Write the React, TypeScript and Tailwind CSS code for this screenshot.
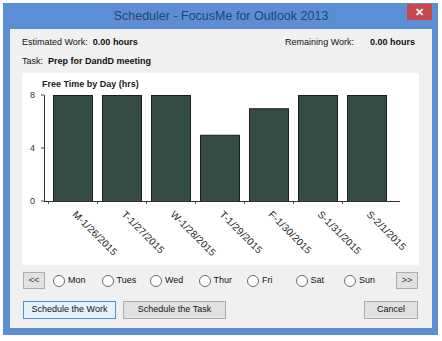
const days = [
  { label: "M-1/26/2015", value: 8 },
  { label: "T-1/27/2015", value: 8 },
  { label: "W-1/28/2015", value: 8 },
  { label: "T-1/29/2015", value: 5 },
  { label: "F-1/30/2015", value: 7 },
  { label: "S-1/31/2015", value: 8 },
  { label: "S-2/1/2015", value: 8 },
];

const radios = ["Mon", "Tues", "Wed", "Thur", "Fri", "Sat", "Sun"];

function FreeTimeChart() {
  const top = 22;
  const zero = 128;
  const scale = (zero - top) / 8;
  return (
    <svg width="397" height="192" className="block">
      <text x="20" y="14" fontSize="9" fontWeight="700" fill="#1a1a1a" fontFamily="Liberation Sans, Arial, sans-serif">
        Free Time by Day (hrs)
      </text>
      {[8, 4, 0].map((v) => (
        <g key={v}>
          <text
            x="13"
            y={zero - v * scale + 3}
            fontSize="9"
            textAnchor="end"
            fill="#333"
            fontFamily="Liberation Sans, Arial, sans-serif"
          >
            {v}
          </text>
          <line x1="19" x2="22" y1={zero - v * scale} y2={zero - v * scale} stroke="#444" />
        </g>
      ))}
      {days.map((d, i) => {
        const x = 31 + i * 49;
        const h = d.value * scale;
        return (
          <g key={d.label}>
            <rect x={x + 0.5} y={zero - h + 0.5} width="39" height={h} fill="#354b46" stroke="#1b1f1e" />
            <line x1={x - 4.5} x2={x - 4.5} y1={zero} y2={zero + 3} stroke="#555" />
            <text
              x={x + 19}
              y={zero + 14}
              fontSize="10"
              letterSpacing="0.2"
              fill="#222"
              transform={`rotate(45 ${x + 19} ${zero + 14})`}
              fontFamily="Liberation Sans, Arial, sans-serif"
            >
              {d.label}
            </text>
          </g>
        );
      })}
      <line x1="22.5" x2="22.5" y1={top} y2={zero + 0.5} stroke="#333" />
      <line x1="22" x2="378" y1={zero + 0.5} y2={zero + 0.5} stroke="#333" />
    </svg>
  );
}

function Radio({ label }: { label: string }) {
  return (
    <label className="flex w-[48.5px] shrink-0 items-center gap-[3px]">
      <span className="h-[12px] w-[12px] rounded-full border border-[#6b6b6b] bg-white" />
      <span>{label}</span>
    </label>
  );
}

export default function App() {
  return (
    <div className="h-[341px] w-[442px] overflow-hidden bg-white pl-[3px] pt-[3px] font-['Liberation_Sans',Arial,sans-serif] text-[9px] text-[#111]">
      <div className="flex h-[332px] w-[435px] flex-col bg-[#5b8ed5] pb-[7px] pl-[7px] pr-[6px]">
        {/* title bar */}
        <div className="relative flex h-[26px] shrink-0 items-center justify-center">
          <span className="text-[12.5px] text-[#2a4468]">Scheduler - FocusMe for Outlook 2013</span>
          <div className="absolute right-[0px] top-[1px] flex h-[16px] w-[25px] items-center justify-center bg-[#c9474b] text-[11px] font-bold leading-none text-white">
            ✕
          </div>
        </div>

        {/* body */}
        <div className="flex flex-1 flex-col bg-[#f0f0f0] pt-[7px]">
          <div className="flex h-[14px] items-center pl-[12px] pr-[17px]">
            <span>Estimated Work:</span>
            <span className="ml-[5px] font-bold">0.00 hours</span>
            <span className="ml-auto">Remaining Work:</span>
            <span className="ml-[16px] font-bold">0.00 hours</span>
          </div>
          <div className="mt-[5px] flex h-[14px] items-center pl-[12px]">
            <span>Task:</span>
            <span className="ml-[5px] font-bold">Prep for DandD meeting</span>
          </div>

          <div className="ml-[12px] mt-[4px] h-[192px] w-[397px] bg-white">
            <FreeTimeChart />
          </div>

          <div className="mt-[7px] flex h-[17px] items-center pl-[13px] pr-[14px]">
            <button className="flex h-[17px] w-[22px] items-center justify-center border border-[#adadad] bg-[#e1e1e1] text-[9px] text-[#333]">
              &lt;&lt;
            </button>
            <div className="ml-[8px] flex">
              {radios.map((r) => (
                <Radio key={r} label={r} />
              ))}
            </div>
            <button className="ml-auto flex h-[17px] w-[22px] items-center justify-center border border-[#adadad] bg-[#e1e1e1] text-[9px] text-[#333]">
              &gt;&gt;
            </button>
          </div>

          <div className="mt-[12px] flex h-[18px] items-center pl-[13px] pr-[14px]">
            <button className="flex h-[18px] w-[93px] items-center justify-center border border-[#4a90d6] bg-[#e5f1fb] text-[9px]">
              Schedule the Work
            </button>
            <button className="ml-[7px] flex h-[18px] w-[103px] items-center justify-center border border-[#adadad] bg-[#e1e1e1] text-[9px]">
              Schedule the Task
            </button>
            <button className="ml-auto flex h-[18px] w-[54px] items-center justify-center border border-[#adadad] bg-[#e1e1e1] text-[9px]">
              Cancel
            </button>
          </div>
        </div>
      </div>
    </div>
  );
}
